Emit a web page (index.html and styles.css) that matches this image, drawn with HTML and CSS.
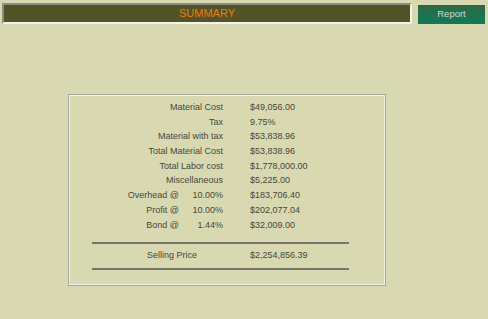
FILE: index.html
```html
<!DOCTYPE html>
<html>
<head>
<meta charset="utf-8">
<link rel="stylesheet" href="styles.css">
</head>
<body>
<div class="header">
  <div class="title-bar">SUMMARY</div>
  <div class="report-btn">Report</div>
</div>
<div class="panel">
  <div class="rows">
    <div class="row"><span class="label">Material Cost</span><span class="value">$49,056.00</span></div>
    <div class="row"><span class="label">Tax</span><span class="value">9.75%</span></div>
    <div class="row"><span class="label">Material with tax</span><span class="value">$53,838.96</span></div>
    <div class="row"><span class="label">Total Material Cost</span><span class="value">$53,838.96</span></div>
    <div class="row"><span class="label">Total Labor cost</span><span class="value">$1,778,000.00</span></div>
    <div class="row"><span class="label">Miscellaneous</span><span class="value">$5,225.00</span></div>
    <div class="row"><span class="name">Overhead @</span><span class="pct">10.00%</span><span class="value">$183,706.40</span></div>
    <div class="row"><span class="name">Profit @</span><span class="pct">10.00%</span><span class="value">$202,077.04</span></div>
    <div class="row"><span class="name">Bond @</span><span class="pct">1.44%</span><span class="value">$32,009.00</span></div>
  </div>
  <div class="rule rule-top"></div>
  <div class="total-row"><span class="total-label">Selling Price</span><span class="value">$2,254,856.39</span></div>
  <div class="rule rule-bottom"></div>
</div>
</body>
</html>
```
FILE: styles.css
```css
html, body {
  margin: 0;
  padding: 0;
  background: #d9d9b1;
  font-family: "Liberation Sans", Arial, sans-serif;
  color: #47473a;
}
.header {
  display: flex;
  align-items: flex-start;
  padding-left: 2px;
}
.title-bar {
  margin-top: 3px;
  width: 406px;
  height: 17px;
  border: 2px solid;
  border-color: #8c8c84 #f4f4ec #f4f4ec #8c8c84;
  background: #535328;
  color: #f07a0a;
  font-size: 11px;
  line-height: 17px;
  text-align: center;
}
.report-btn {
  margin-top: 5px;
  margin-left: 6px;
  width: 67px;
  height: 19px;
  background: linear-gradient(#2e6844, #0f7b56);
  color: #cfd8cf;
  font-size: 9.5px;
  line-height: 18px;
  text-align: center;
}
.panel {
  margin-top: 70px;
  margin-left: 68px;
  width: 316px;
  height: 190px;
  border: 1px solid #a6a6a0;
  box-shadow: inset 0 0 0 1px #f2f2ea;
  font-size: 9px;
}
.rows {
  padding-top: 5px;
}
.row {
  display: grid;
  grid-template-columns: 110px 44px 27px auto;
  height: 14.7px;
  line-height: 14.7px;
}
.label {
  grid-column: 1 / 3;
  text-align: right;
}
.name {
  text-align: right;
}
.pct {
  text-align: right;
}
.value {
  grid-column: 4;
}
.rule {
  margin-left: 23px;
  width: 257px;
  height: 2px;
  background: #76766c;
}
.rule-top {
  margin-top: 10px;
}
.rule-bottom {
  margin-top: 5px;
}
.total-row {
  display: grid;
  grid-template-columns: 78px 103px auto;
  margin-top: 4px;
  height: 14.7px;
  line-height: 14.7px;
}
.total-label {
  grid-column: 2;
}
.total-row .value {
  grid-column: 3;
}
```
